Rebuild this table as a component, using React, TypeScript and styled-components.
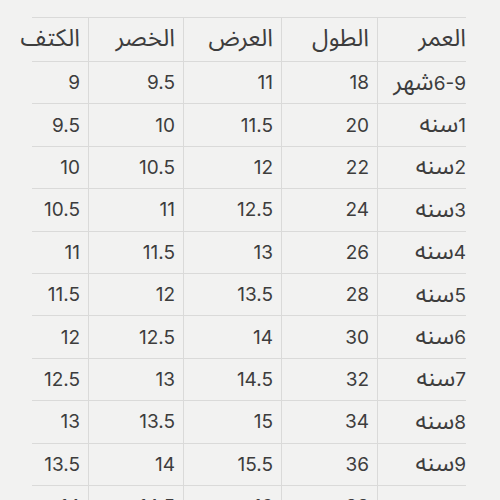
import React from 'react';
import styled, { createGlobalStyle } from 'styled-components';

const GlobalStyle = createGlobalStyle`
  html, body {
    margin: 0;
    padding: 0;
    background: #f2f2f1;
  }
  body {
    font-family: Inter, "Noto Sans Arabic", "DejaVu Sans", sans-serif;
    color: #3d3d3d;
  }
`;

const headers = ['العمر', 'الطول', 'العرض', 'الخصر', 'الكتف'];

const rows: string[][] = [
  ['6-9شهر', '18', '11', '9.5', '9'],
  ['1سنه', '20', '11.5', '10', '9.5'],
  ['2سنه', '22', '12', '10.5', '10'],
  ['3سنه', '24', '12.5', '11', '10.5'],
  ['4سنه', '26', '13', '11.5', '11'],
  ['5سنه', '28', '13.5', '12', '11.5'],
  ['6سنه', '30', '14', '12.5', '12'],
  ['7سنه', '32', '14.5', '13', '12.5'],
  ['8سنه', '34', '15', '13.5', '13'],
  ['9سنه', '36', '15.5', '14', '13.5'],
  ['10سنه', '38', '16', '14.5', '14'],
];

const Page = styled.div`
  height: 500px;
  overflow: hidden;
  padding: 17px 0 0 32px;
  box-sizing: border-box;
`;

const Table = styled.div`
  direction: rtl;
  display: grid;
  grid-template-columns: 88px 96px 98px 95px 56px;
  width: 433px;
`;

const Cell = styled.div<{ $head?: boolean; $first?: boolean; $last?: boolean }>`
  height: ${(p) => (p.$head ? 44 : 42.4)}px;
  box-sizing: border-box;
  display: flex;
  align-items: center;
  justify-content: flex-start;
  padding-right: ${(p) => (p.$first ? 0 : 8)}px;
  padding-bottom: ${(p) => (p.$head ? 2 : 0)}px;
  margin-right: ${(p) => (p.$first ? -1 : 0)}px;
  border-top: 1px solid #dadad9;
  border-left: ${(p) => (p.$last ? 'none' : '1px solid #dadad9')};
  font-size: 19px;
  white-space: nowrap;
  overflow: visible;
`;

const Arabic = styled.span`
  font-family: "Noto Sans Arabic", "DejaVu Sans", sans-serif;
  font-size: 24px;
  line-height: 1;
`;

// split a label into digit runs and arabic runs so the arabic can be sized up
const Label = ({ text }: { text: string }) => {
  const parts = text.match(/[0-9.\-]+|[^0-9.\-]+/g) || [];
  return (
    <span>
      {parts.map((p, i) => (/[0-9]/.test(p) ? <span key={i}>{p}</span> : <Arabic key={i}>{p}</Arabic>))}
    </span>
  );
};

export default function App() {
  return (
    <>
      <GlobalStyle />
      <Page>
        <Table>
          {headers.map((h, i) => (
            <Cell key={h} $head $first={i === 0} $last={i === headers.length - 1}>
              <Label text={h} />
            </Cell>
          ))}
          {rows.map((r, ri) =>
            r.map((v, ci) => (
              <Cell key={`${ri}-${ci}`} $first={ci === 0} $last={ci === r.length - 1}>
                <Label text={v} />
              </Cell>
            ))
          )}
        </Table>
      </Page>
    </>
  );
}
